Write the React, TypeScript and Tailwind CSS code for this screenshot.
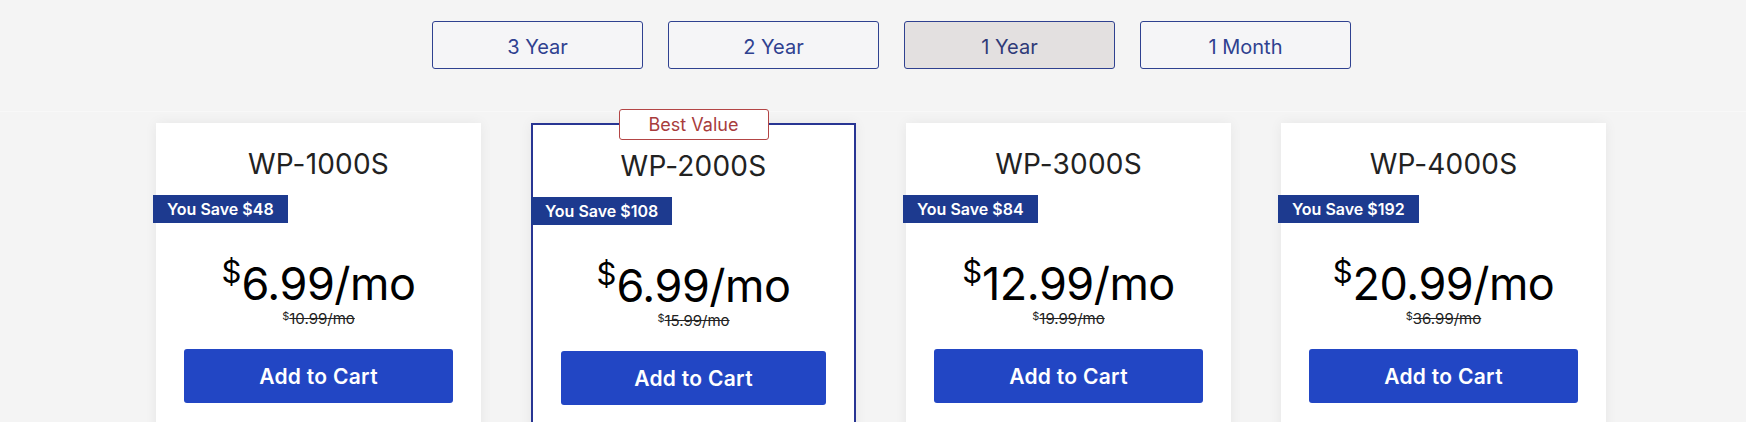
import React from 'react';

const terms = ['3 Year', '2 Year', '1 Year', '1 Month'];

const plans = [
  { name: 'WP-1000S', save: 48, price: '6.99', was: '10.99', best: false },
  { name: 'WP-2000S', save: 108, price: '6.99', was: '15.99', best: true },
  { name: 'WP-3000S', save: 84, price: '12.99', was: '19.99', best: false },
  { name: 'WP-4000S', save: 192, price: '20.99', was: '36.99', best: false },
];

type Plan = (typeof plans)[number];

function PlanCard({ plan }: { plan: Plan }) {
  return (
    <div
      className={
        'relative flex h-[340px] w-[325px] flex-col bg-white pt-[23px] shadow-[0_0_12px_rgba(0,0,0,0.06)] ' +
        (plan.best ? 'border-2 border-[#283593] pt-[22px]' : '')
      }
    >
      {plan.best ? (
        <div className="absolute left-1/2 top-[-16px] flex h-[31px] w-[150px] -translate-x-1/2 items-center justify-center rounded-[3px] border border-[#b34545] bg-white text-[18px] text-[#a83c3c]">
          Best Value
        </div>
      ) : (
        <></>
      )}
      <h3 className="text-center text-[28px] font-normal leading-[36px] tracking-[0.2px] text-[#222]">
        {plan.name}
      </h3>
      <div className={'mt-[13px] flex ' + (plan.best ? '-ml-[2px]' : '-ml-[3px]')}>
        <span className="flex h-[28px] items-center bg-[#1d3a8f] px-[14px] text-[16px] font-semibold text-white">
          You Save ${plan.save}
        </span>
      </div>
      <div className="mt-[37px] flex items-start justify-center text-black">
        <span className="mt-[-5px] text-[31px] font-normal leading-[34px]">$</span>
        <span className="text-[45px] font-normal leading-[48px] tracking-[-0.5px]">{plan.price}/mo</span>
      </div>
      <div className="mt-[2px] flex items-start justify-center text-[#222]">
        <span className="text-[11px] leading-[12px]">$</span>
        <span className="text-[15px] leading-[18px] line-through">{plan.was}/mo</span>
      </div>
      <button className="mx-[28px] mt-[21px] h-[54px] rounded-[3px] bg-[#2246c4] pt-[2px] text-[21px] font-semibold tracking-[0.3px] text-white">
        Add to Cart
      </button>
    </div>
  );
}

export default function App() {
  return (
    <div
      className="h-[422px] w-full overflow-hidden bg-[#f4f4f4]"
      style={{ fontFamily: 'Inter, "Noto Sans", sans-serif' }}
    >
      <div className="flex h-[112px] justify-center gap-[25px] border-b border-[#f8f8f8] pl-[37px] pt-[21px]">
        {terms.map((term) => (
          <button
            key={term}
            className={
              'h-[48px] w-[211px] rounded-[3px] border border-[#2f4190] pt-[3px] text-[20px] ' +
              (term === '1 Year' ? 'bg-[#e3e0e0] text-[#2f3a78]' : 'bg-[#f5f5f7] text-[#2f4190]')
            }
          >
            {term}
          </button>
        ))}
      </div>
      <div className="flex justify-center gap-[50px] pl-[16px] pt-[11px]">
        {plans.map((plan) => (
          <PlanCard key={plan.name} plan={plan} />
        ))}
      </div>
    </div>
  );
}
